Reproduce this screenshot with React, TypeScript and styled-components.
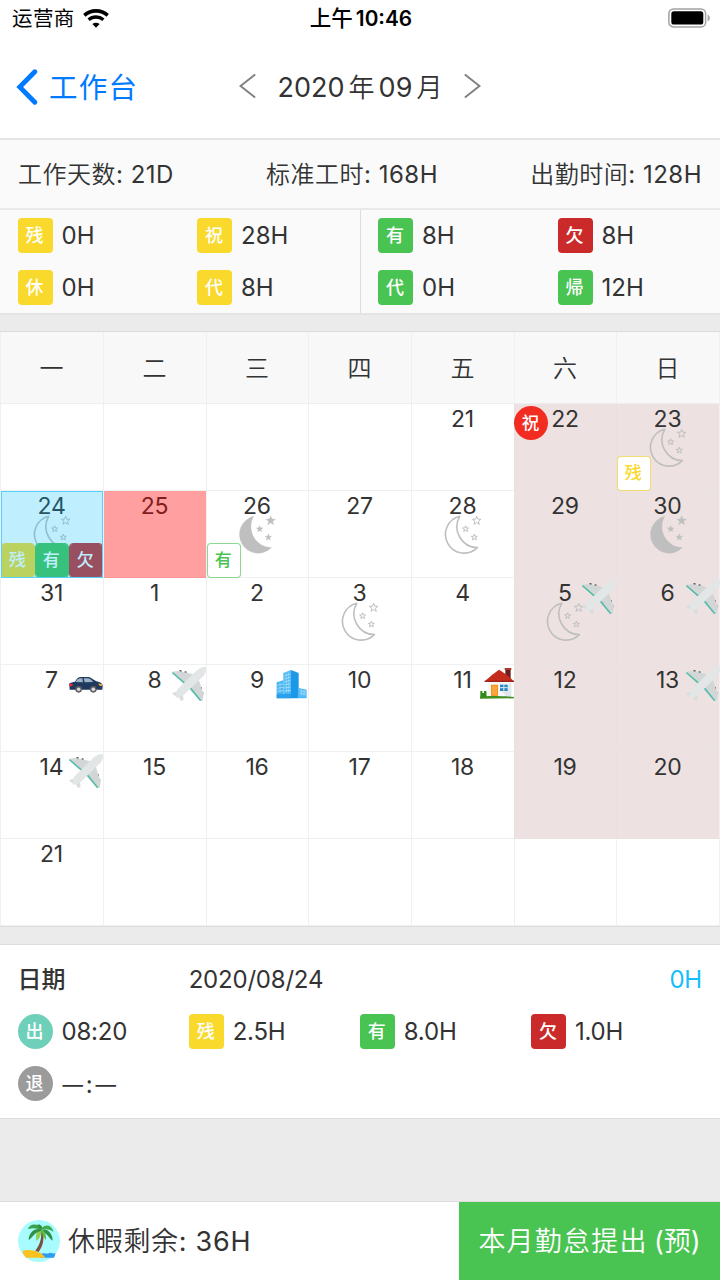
import React from 'react';
import styled, { createGlobalStyle } from 'styled-components';

const palette = {
  yellow: '#f9d92b',
  green: '#49c351',
  red: '#cb2a2a',
  holiday: '#f22c20',
  mint: '#6fd0ba',
  grey: '#9b9b9b',
  text: '#333333',
  line: '#dddddd',
  softLine: '#e4e4e4',
  band: '#ebebeb',
};

const strongFont = "Inter, 'Noto Sans CJK SC', sans-serif";

const GlobalStyle = createGlobalStyle`
  * { box-sizing: border-box; }
  body {
    margin: 0;
    background: ${palette.band};
    color: ${palette.text};
    font-family: Inter, 'Noto Sans CJK SC DemiLight', 'Noto Sans CJK SC', sans-serif;
    font-size: 24px;
    -webkit-font-smoothing: antialiased;
  }
`;

const Screen = styled.div`
  width: 720px;
  height: 1280px;
  overflow: hidden;
  display: flex;
  flex-direction: column;
  background: ${palette.band};
`;

const StatusBar = styled.div`
  display: grid;
  grid-template-columns: 1fr auto 1fr;
  align-items: center;
  height: 38px;
  padding: 0 10px 2px 12px;
  background: #fff;
  color: #000;
  font-family: ${strongFont};
`;

const Carrier = styled.div`
  display: flex;
  align-items: center;
  gap: 8px;
  font-size: 20.5px;
  letter-spacing: 0.4px;
  line-height: 34px;
  span { padding-top: 2px; }
`;

const Clock = styled.div`
  display: flex;
  align-items: baseline;
  gap: 3px;
  padding-top: 1px;
  font-size: 20.8px;
  font-weight: 600;
  line-height: 34px;
`;

const ClockPeriod = styled.span`
  font-size: 21.5px;
  font-weight: 500;
`;

const BatteryIcon = styled.svg`
  justify-self: end;
`;

const NavBar = styled.header`
  display: grid;
  grid-template-columns: 1fr auto 1fr;
  align-items: center;
  height: 102px;
  padding: 0 16px 3px;
  background: #fff;
  border-bottom: 2px solid ${palette.softLine};
`;

const BackLink = styled.div`
  display: flex;
  align-items: center;
  gap: 11px;
  color: #007aff;
  font-family: ${strongFont};
  font-size: 28.5px;
  letter-spacing: 1.2px;
  span { padding-bottom: 3px; }
`;

const MonthPicker = styled.div`
  display: flex;
  align-items: center;
  gap: 22px;
`;

const MonthTitle = styled.div`
  display: flex;
  align-items: baseline;
  gap: 4px;
  padding-bottom: 3px;
  font-size: 27px;
`;

const MonthUnit = styled.span`
  font-size: 26px;
`;

const Summary = styled.div`
  display: flex;
  align-items: center;
  justify-content: space-between;
  height: 70px;
  padding: 0 18px 4px;
  background: #fafafa;
  border-bottom: 2px solid #e9e9e9;
  letter-spacing: 0.5px;
`;

const Stats = styled.div`
  display: grid;
  grid-template-columns: 360px 360px;
  height: 105px;
  background: #fafafa;
  border-bottom: 2px solid ${palette.softLine};
`;

const StatsHalf = styled.div<{ $divided?: boolean }>`
  display: grid;
  grid-template-columns: 179.5px 1fr;
  grid-template-rows: 51px 52px;
  align-items: center;
  padding-left: ${(p) => (p.$divided ? 17 : 17.5)}px;
  border-left: ${(p) => (p.$divided ? `1px solid ${palette.line}` : 'none')};
`;

const Entry = styled.div`
  display: flex;
  align-items: center;
  gap: 9px;
`;

const Tag = styled.span<{ $color: string; $round?: boolean }>`
  display: flex;
  align-items: center;
  justify-content: center;
  width: 35px;
  height: 35px;
  padding: 1px 1px 0 0;
  border-radius: ${(p) => (p.$round ? '50%' : '4px')};
  background: ${(p) => p.$color};
  color: #fff;
  font-family: ${strongFont};
  font-size: 18px;
  font-weight: 500;
  line-height: 1;
  letter-spacing: 0;
`;

const weekColumns = '103px 103px 102px 103px 103px 102px 104px';

const Calendar = styled.section`
  margin-top: 16px;
  border-top: 1px solid ${palette.line};
  border-bottom: 1px solid ${palette.line};
  background: #fff;
`;

const WeekHeader = styled.div`
  display: grid;
  grid-template-columns: ${weekColumns};
  height: 72px;
  background: #f8f8f8;
  border-bottom: 1px solid #efefef;
`;

const WeekdayCell = styled.div`
  display: flex;
  align-items: center;
  justify-content: center;
  padding: 0 1px 2px 0;
  border-left: 1px solid #f0f0f0;
  &:last-child { border-right: 1px solid #f0f0f0; }
`;

const Week = styled.div`
  display: grid;
  grid-template-columns: ${weekColumns};
  height: 87px;
`;

const DayCell = styled.div<{ $weekend?: boolean }>`
  position: relative;
  display: flex;
  justify-content: center;
  background: ${(p) => (p.$weekend ? '#ede1e1' : '#fff')};
  border-left: 1px solid ${(p) => (p.$weekend ? '#e9e0e0' : '#f0f0f0')};
  border-bottom: 1px solid ${(p) => (p.$weekend ? '#eae2e2' : '#f0f0f0')};
  &:last-child { border-right: 1px solid #f0f0f0; }
`;

const DayNumber = styled.span`
  padding-right: 1px;
  font-size: 23px;
  line-height: 30px;
  letter-spacing: -0.2px;
`;

const MoonSlot = styled.div`
  position: absolute;
  top: 24px;
  left: 50%;
  width: 39px;
  height: 39px;
  margin-left: -20.5px;
  svg { display: block; }
`;

const TravelSlot = styled.div`
  position: absolute;
  top: 2px;
  right: 0;
  svg { display: block; }
  ${DayCell}:last-child & { right: -1px; }
`;

const HolidayMark = styled.span`
  position: absolute;
  top: 2px;
  left: -1px;
  display: flex;
  align-items: center;
  justify-content: center;
  width: 34px;
  height: 34px;
  padding-right: 1px;
  border-radius: 50%;
  background: ${palette.holiday};
  color: #fff;
  font-family: ${strongFont};
  font-size: 17.5px;
  font-weight: 500;
  line-height: 1;
`;

const MarkRow = styled.div`
  position: absolute;
  left: 0;
  bottom: -1px;
  display: flex;
`;

const Mark = styled.span<{ $color: string; $outline?: boolean }>`
  display: flex;
  align-items: center;
  justify-content: center;
  width: 34px;
  height: 35px;
  padding-right: 1.5px;
  border-radius: 4px;
  border: 1px solid ${(p) => (p.$outline ? `${p.$color}a0` : p.$color)};
  background: ${(p) => (p.$outline ? '#fff' : p.$color)};
  background-clip: padding-box;
  color: ${(p) => (p.$outline ? p.$color : '#fff')};
  font-family: ${strongFont};
  font-size: 17px;
  font-weight: 500;
  line-height: 1;
`;

const SelectedVeil = styled.div`
  position: absolute;
  inset: 0 0 -1px 0;
  background: rgba(0, 190, 255, 0.25);
  border: 1px solid #55d2fb;
`;

const AlertVeil = styled.div`
  position: absolute;
  inset: 0 0 -1px 0;
  background: rgba(255, 0, 0, 0.375);
`;

const Detail = styled.section`
  height: 175px;
  margin-top: 17px;
  padding: 8px 18px 0 17.5px;
  background: #fff;
  border-top: 1px solid ${palette.line};
  border-bottom: 1px solid ${palette.line};
  letter-spacing: -0.2px;
`;

const DetailRow = styled.div`
  display: grid;
  grid-template-columns: repeat(4, 1fr);
  align-items: center;
  height: 52px;
`;

const DetailLabel = styled.span`
  padding-bottom: 3px;
  font-family: ${strongFont};
  font-weight: 500;
  letter-spacing: 0;
`;

const DetailDate = styled.span`
  grid-column: 2 / 4;
`;

const DetailTotal = styled.span`
  justify-self: end;
  color: #15bdfb;
`;

const EmptyTime = styled.span`
  display: flex;
  align-items: center;
  gap: 3px;
  padding: 2px 0 0 1px;
`;

const Dash = styled.span`
  font-size: 20.5px;
`;

const Footer = styled.footer`
  display: flex;
  height: 79px;
  margin-top: auto;
  background: #fff;
  border-top: 1px solid ${palette.line};
`;

const LeaveBalance = styled.div`
  flex: 1;
  display: flex;
  align-items: center;
  gap: 8px;
  padding-left: 18px;
  font-size: 27px;
  letter-spacing: 0.7px;
  span { padding-bottom: 4px; }
`;

const SubmitButton = styled.button`
  width: 261px;
  padding: 0 0 3px;
  border: 0;
  background: ${palette.green};
  color: #fff;
  font: inherit;
  font-size: 27px;
  letter-spacing: 1.2px;
  word-spacing: -2.5px;
`;

const ButtonNote = styled.span`
  letter-spacing: 0;
`;

const starPoints = (cx: number, cy: number, r: number) =>
  Array.from({ length: 10 }, (_, i) => {
    const radius = i % 2 ? r * 0.42 : r;
    const angle = (Math.PI / 5) * i - Math.PI / 2;
    return `${(cx + radius * Math.cos(angle)).toFixed(1)},${(cy + radius * Math.sin(angle)).toFixed(1)}`;
  }).join(' ');

const Moon = ({ filled }: { filled?: boolean }) => (
  <svg width="39" height="39" viewBox="0 0 117 117" fill={filled ? '#bfbfbf' : 'none'} stroke="#bfbfbf" strokeLinejoin="round">
    <path d="M50 4 A56 56 0 1 0 103 98 A63 63 0 0 1 50 4 Z" strokeWidth={filled ? 1 : 4.8} />
    <g strokeWidth={filled ? 1 : 3}>
      <polygon points={starPoints(101, 17, filled ? 15 : 13.5)} />
      <polygon points={starPoints(68, 42, filled ? 10.5 : 9.5)} />
      <polygon points={starPoints(94, 67, filled ? 10.5 : 9.5)} />
    </g>
  </svg>
);

const Plane = () => (
  <svg width="34" height="34" viewBox="0 0 102 102">
    <g fill="#565d60">
      <rect x="22" y="9" width="7" height="6" rx="2" transform="rotate(20 25 12)" />
      <rect x="37" y="13" width="7" height="6" rx="2" transform="rotate(20 40 16)" />
      <rect x="84" y="60" width="6" height="7" rx="2" />
      <rect x="88" y="75" width="6" height="7" rx="2" />
    </g>
    <path d="M0 14 L19 12 L58 20 L74 24 L42 56 Z" fill="#d3d6d6" />
    <path d="M46 60 L78 30 L86 56 L95 82 L92 101 L84 102 Z" fill="#d3d6d6" />
    <path d="M1 17 L42 52 M53 60 L86 101" stroke="#4dbda9" strokeWidth="4.500" fill="none" />
    <path d="M1 78 L18 73 L32 82 L35 98 L28 102 L20 90 L4 84 Z" fill="#d9dddd" />
    <path d="M101 1 C92 -2 82 4 72 12 L17 67 C12 76 10 84 11 91 C18 93 28 89 36 83 L91 30 C100 21 105 10 101 1 Z" fill="#e2e6e6" />
  </svg>
);

const Car = () => (
  <svg width="34" height="34" viewBox="0 0 102 102">
    <path d="M1 50 C3 46 12 45 18 44 C24 34 28 30 36 30 L58 30 C66 31 73 38 82 43 C93 45 101 49 101 57 L100 68 L2 68 Z" fill="#20395f" />
    <path d="M20 45 C25 36 29 34 36 34 L40 34 L42 46 Z M44 34 L57 34 C64 35 68 40 73 45 L47 46 Z" fill="#9fb2c8" />
    <path d="M1 50 L11 50 L10 58 L1 58 Z" fill="#ee2a32" />
    <path d="M88 49 L99 52 L99 57 L91 56 Z" fill="#f6a832" />
    <circle cx="29" cy="67" r="10" fill="#5d5d5d" />
    <circle cx="29" cy="67" r="5.5" fill="#d9d9d9" />
    <circle cx="73" cy="67" r="10" fill="#5d5d5d" />
    <circle cx="73" cy="67" r="5.5" fill="#d9d9d9" />
  </svg>
);

const Office = () => (
  <svg width="34" height="34" viewBox="0 0 102 102">
    <path d="M8 46 L28 40 L28 94 L8 94 Z" fill="#45b4f3" />
    <path d="M28 18 L51 9 L51 94 L28 94 Z" fill="#4fbaf5" />
    <path d="M51 9 L74 18 L74 94 L51 94 Z" fill="#1b98e8" />
    <path d="M74 63 L98 68 L98 94 L74 94 Z" fill="#4fbaf5" />
    <g stroke="#c6e8fc" strokeWidth="2" fill="none">
      <path d="M31 27 L50 20 M31 36 L50 30 M31 45 L50 40 M31 54 L50 50 M31 63 L50 60 M31 72 L50 70" />
      <path d="M10 55 L27 51 M10 64 L27 61 M10 73 L27 71 M77 71 L96 75 M77 79 L96 82" />
      <path d="M37 15 L37 76 M44 13 L44 76 M18 44 L18 78" strokeWidth="1.2" />
      <path d="M82 65 L82 86 M90 67 L90 87" strokeWidth="1.2" />
    </g>
    <path d="M8 82 L51 80 L51 94 L8 94 Z" fill="#2d9fea" />
  </svg>
);

const House = () => (
  <svg width="34" height="34" viewBox="0 0 102 102">
    <path d="M76 5 L92 5 L92 38 L76 30 Z" fill="#6e1d1f" />
    <path d="M74 3 L94 3 L94 9 L74 9 Z" fill="#a83a2b" />
    <path d="M23 42 L94 42 L94 90 L23 90 Z" fill="#f5f7f7" />
    <path d="M66 72 L94 44 L94 90 L80 90 Z" fill="#dfe9ec" />
    <path d="M14 43 C30 28 44 17 57 8 C74 18 90 31 102 43 Z" fill="#c32b1b" />
    <path d="M14 41 L102 41 L102 45 L14 45 Z" fill="#9a2218" />
    <path d="M33 53 L54 53 L54 90 L33 86 Z" fill="#f3921e" />
    <path d="M36 57 L51 57 L51 86 L36 84 Z" fill="#f9a73c" />
    <rect x="60" y="53" width="23" height="19" fill="#2c86bd" />
    <path d="M71.500 53 V72 M60 62 H83" stroke="#d9eef8" strokeWidth="3" />
    <path d="M0 89 C24 86 70 87 102 90 L102 94 L0 95 Z" fill="#3f8f1f" />
    <path d="M1 72 L7 72 L7 78 L12 78 L12 72 L19 72 L20 90 L1 90 Z" fill="#2f8a17" />
  </svg>
);

const Island = () => (
  <svg width="42" height="42" viewBox="0 0 126 126">
    <circle cx="63" cy="63" r="63" fill="#a8fcff" />
    <path d="M66 102 C80 96 88 104 94 99 C100 96 106 103 113 100 L108 113 L66 113 Z" fill="#2f9bf0" />
    <path d="M13 92 C36 86 70 94 82 113 L24 113 C18 106 14 99 13 92 Z" fill="#fbc11d" />
    <path d="M73 28 C80 52 77 76 62 96 L52 92 C66 74 73 52 68 30 Z" fill="#7d5141" />
    <path d="M70 28 C58 30 50 44 56 64 C64 56 70 44 72 30 Z" fill="#8dcf4e" />
    <path d="M74 30 C86 24 104 40 104 62 C96 58 92 46 76 36 Z" fill="#2f9146" />
    <path d="M70 24 C56 8 34 12 30 28 C44 22 56 24 70 30 Z" fill="#39a04b" />
    <path d="M70 28 C50 22 32 38 32 60 C44 54 46 38 70 32 Z" fill="#2f9146" />
    <path d="M72 24 C84 10 104 18 106 36 C96 28 84 26 72 30 Z" fill="#43ab50" />
    <path d="M72 28 C78 30 86 46 84 60 C76 52 72 42 70 30 Z" fill="#5cb94c" />
    <path d="M58 14 C66 12 74 18 73 28 C66 26 60 22 58 14 Z" fill="#2f9146" />
  </svg>
);

const travelIcons = { plane: Plane, car: Car, office: Office, house: House };

type TagSpec = { label: string; color: string; outline?: boolean };
type Day = {
  n: number;
  moon?: 'line' | 'full';
  travel?: keyof typeof travelIcons;
  holiday?: string;
  marks?: TagSpec[];
  state?: 'selected' | 'alert';
};

const weekdays = ['一', '二', '三', '四', '五', '六', '日'];

const weeks: (Day | null)[][] = [
  [null, null, null, null, { n: 21 }, { n: 22, holiday: '祝' },
    { n: 23, moon: 'line', marks: [{ label: '残', color: palette.yellow, outline: true }] }],
  [
    {
      n: 24, moon: 'line', state: 'selected',
      marks: [
        { label: '残', color: palette.yellow },
        { label: '有', color: palette.green },
        { label: '欠', color: palette.red },
      ],
    },
    { n: 25, state: 'alert' },
    { n: 26, moon: 'full', marks: [{ label: '有', color: palette.green, outline: true }] },
    { n: 27 }, { n: 28, moon: 'line' }, { n: 29 }, { n: 30, moon: 'full' },
  ],
  [{ n: 31 }, { n: 1 }, { n: 2 }, { n: 3, moon: 'line' }, { n: 4 },
    { n: 5, moon: 'line', travel: 'plane' }, { n: 6, travel: 'plane' }],
  [{ n: 7, travel: 'car' }, { n: 8, travel: 'plane' }, { n: 9, travel: 'office' }, { n: 10 },
    { n: 11, travel: 'house' }, { n: 12 }, { n: 13, travel: 'plane' }],
  [{ n: 14, travel: 'plane' }, { n: 15 }, { n: 16 }, { n: 17 }, { n: 18 }, { n: 19 }, { n: 20 }],
  [{ n: 21 }, null, null, null, null, null, null],
];

const leftStats = [
  { label: '残', color: palette.yellow, value: '0H' },
  { label: '祝', color: palette.yellow, value: '28H' },
  { label: '休', color: palette.yellow, value: '0H' },
  { label: '代', color: palette.yellow, value: '8H' },
];

const rightStats = [
  { label: '有', color: palette.green, value: '8H' },
  { label: '欠', color: palette.red, value: '8H' },
  { label: '代', color: palette.green, value: '0H' },
  { label: '帰', color: palette.green, value: '12H' },
];

const StatEntry = ({ label, color, value, round }: { label: string; color: string; value: string; round?: boolean }) => (
  <Entry>
    <Tag $color={color} $round={round}>{label}</Tag>
    <span>{value}</span>
  </Entry>
);

const CalendarDay = ({ day, weekend }: { day: Day | null; weekend: boolean }) => {
  if (!day) return <DayCell />;
  const Travel = day.travel ? travelIcons[day.travel] : null;
  return (
    <DayCell $weekend={weekend}>
      {day.moon && <MoonSlot><Moon filled={day.moon === 'full'} /></MoonSlot>}
      <DayNumber>{day.n}</DayNumber>
      {day.holiday && <HolidayMark>{day.holiday}</HolidayMark>}
      {Travel && <TravelSlot><Travel /></TravelSlot>}
      {day.marks && (
        <MarkRow>
          {day.marks.map((m) => (
            <Mark key={m.label} $color={m.color} $outline={m.outline}>{m.label}</Mark>
          ))}
        </MarkRow>
      )}
      {day.state === 'selected' && <SelectedVeil />}
      {day.state === 'alert' && <AlertVeil />}
    </DayCell>
  );
};

export default function App() {
  return (
    <>
      <GlobalStyle />
      <Screen>
        <StatusBar>
          <Carrier>
            <span>运营商</span>
            <svg width="26" height="19" viewBox="0 0 26 19" fill="none" stroke="#000">
              <path d="M1.300 6.400 C8 0.300 18 0.300 24.700 6.400" strokeWidth="3.600" />
              <path d="M5.600 10.800 C10 7 16 7 20.400 10.800" strokeWidth="3.400" />
              <path d="M13 18.800 L9.400 15.100 C11.500 13.300 14.500 13.300 16.600 15.100 Z" fill="#000" stroke="none" />
            </svg>
          </Carrier>
          <Clock>
            <ClockPeriod>上午</ClockPeriod>
            <span>10:46</span>
          </Clock>
          <BatteryIcon width="42" height="20" viewBox="0 0 42 20">
            <rect x="0.900" y="0.900" width="36.700" height="18" rx="4.500" fill="#fff" stroke="#a2a2a2" strokeWidth="1.500" />
            <rect x="3.300" y="3.300" width="32" height="13.200" rx="2.600" fill="#000" />
            <path d="M39.700 6.500 C42.500 8 42.500 12 39.700 13.500 Z" fill="#a2a2a2" />
          </BatteryIcon>
        </StatusBar>

        <NavBar>
          <BackLink>
            <svg width="22" height="36" viewBox="0 0 22 36" fill="none" stroke="#007aff" strokeWidth="4.800" strokeLinecap="round" strokeLinejoin="miter">
              <path d="M18.800 2.700 L3.700 18 L18.800 33.300" />
            </svg>
            <span>工作台</span>
          </BackLink>
          <MonthPicker>
            <svg width="17" height="25" viewBox="0 0 17 25" fill="none" stroke="#808080" strokeWidth="2" strokeLinecap="round">
              <path d="M15.500 1 L1.500 12 L15.500 23" />
            </svg>
            <MonthTitle>
              <span>2020</span>
              <MonthUnit>年</MonthUnit>
              <span>09</span>
              <MonthUnit>月</MonthUnit>
            </MonthTitle>
            <svg width="17" height="25" viewBox="0 0 17 25" fill="none" stroke="#808080" strokeWidth="2" strokeLinecap="round">
              <path d="M1.500 1 L15.500 12 L1.500 23" />
            </svg>
          </MonthPicker>
        </NavBar>

        <Summary>
          <span>工作天数: 21D</span>
          <span>标准工时: 168H</span>
          <span>出勤时间: 128H</span>
        </Summary>

        <Stats>
          <StatsHalf>
            {leftStats.map((s) => <StatEntry key={s.label} {...s} />)}
          </StatsHalf>
          <StatsHalf $divided>
            {rightStats.map((s) => <StatEntry key={s.label} {...s} />)}
          </StatsHalf>
        </Stats>

        <Calendar>
          <WeekHeader>
            {weekdays.map((d) => <WeekdayCell key={d}>{d}</WeekdayCell>)}
          </WeekHeader>
          {weeks.map((week, row) => (
            <Week key={row}>
              {week.map((day, col) => <CalendarDay key={col} day={day} weekend={col > 4} />)}
            </Week>
          ))}
        </Calendar>

        <Detail>
          <DetailRow>
            <DetailLabel>日期</DetailLabel>
            <DetailDate>2020/08/24</DetailDate>
            <DetailTotal>0H</DetailTotal>
          </DetailRow>
          <DetailRow>
            <StatEntry label="出" color={palette.mint} value="08:20" round />
            <StatEntry label="残" color={palette.yellow} value="2.5H" />
            <StatEntry label="有" color={palette.green} value="8.0H" />
            <StatEntry label="欠" color={palette.red} value="1.0H" />
          </DetailRow>
          <DetailRow>
            <Entry>
              <Tag $color={palette.grey} $round>退</Tag>
              <EmptyTime>
                <Dash>—</Dash>
                <span>:</span>
                <Dash>—</Dash>
              </EmptyTime>
            </Entry>
          </DetailRow>
        </Detail>

        <Footer>
          <LeaveBalance>
            <Island />
            <span>休暇剩余: 36H</span>
          </LeaveBalance>
          <SubmitButton>本月勤怠提出 <ButtonNote>(预)</ButtonNote></SubmitButton>
        </Footer>
      </Screen>
    </>
  );
}
